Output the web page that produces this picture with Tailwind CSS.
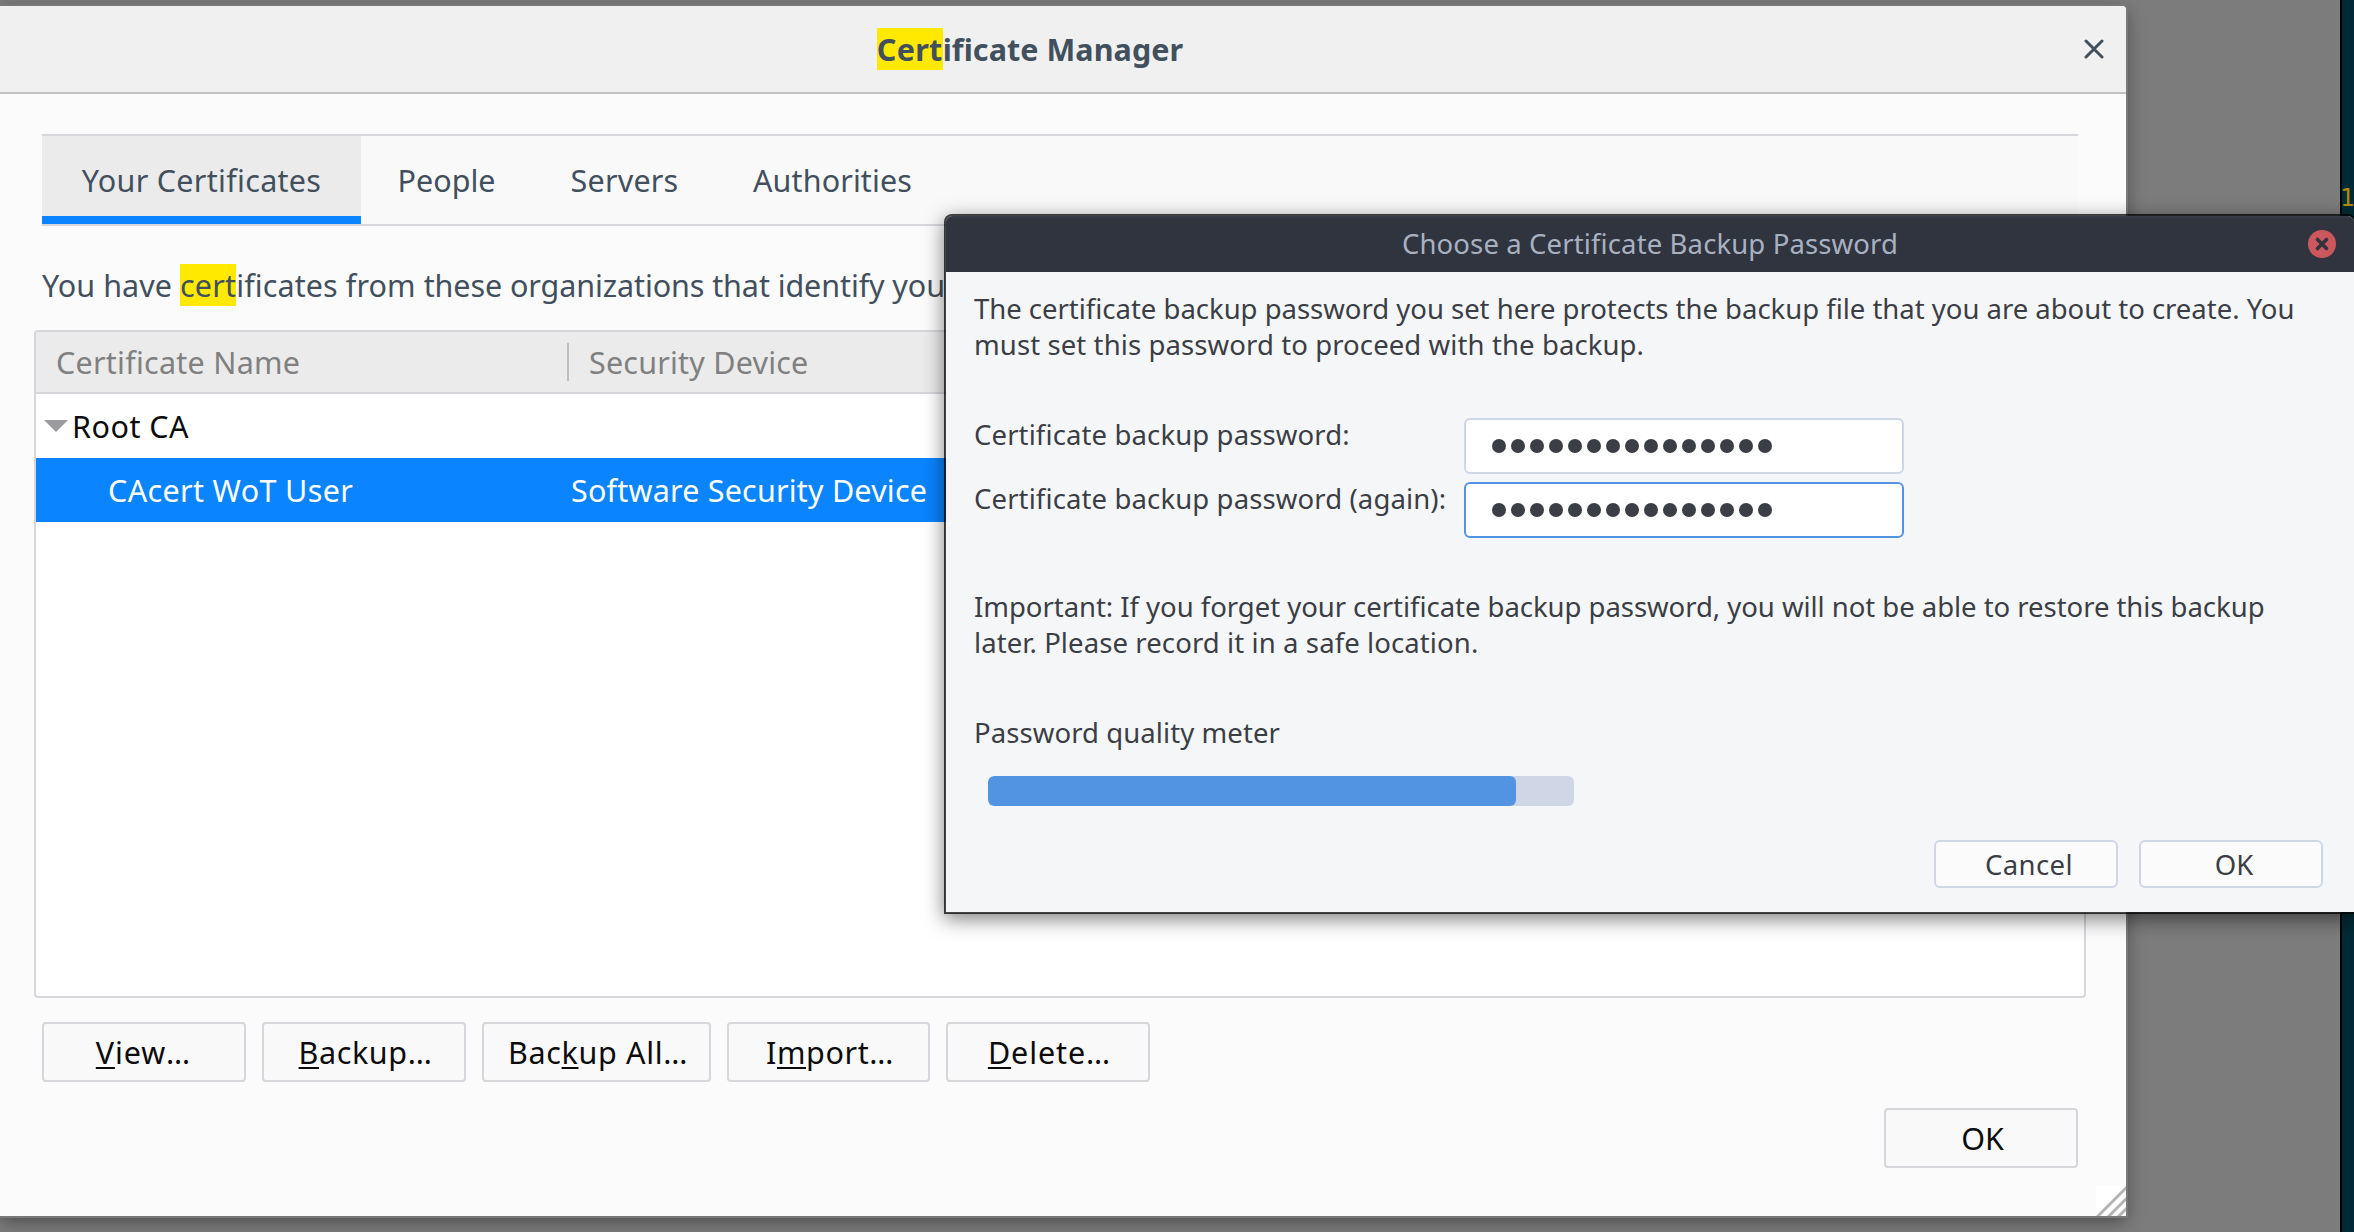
<!DOCTYPE html>
<html lang="en">
<head>
<meta charset="utf-8">
<title>Certificate Manager</title>
<script src="https://cdn.jsdelivr.net/npm/@tailwindcss/browser@4"></script>
</head>
<body class="relative h-[1232px] w-[2354px] overflow-hidden bg-[#7c7c7c] font-['Noto_Sans',sans-serif] text-[30.5px] leading-[42px] text-[#42505e]">

<!-- terminal behind -->
<div class="absolute top-0 left-[2340px] h-full w-[14px] overflow-hidden border-l-2 border-black bg-[#002b36] pt-[184px] font-['DejaVu_Sans_Mono',monospace] text-[24px] leading-[28px] text-[#b58900]"><span class="-ml-[2px]">1</span></div>

<!-- certificate manager window -->
<section class="absolute top-[6px] left-0 flex h-[1210px] w-[2126px] flex-col rounded-tr-[4px] bg-[#fbfbfb] shadow-[0_0_0_2px_#7a7878,0_5px_18px_rgba(0,0,0,0.42)]">
  <header class="flex h-[88px] shrink-0 items-center rounded-tr-[4px] border-b-2 border-[#c1c1c1] bg-[#f0f0f0]">
    <h1 class="w-[2060px] text-center font-bold tracking-[0.06px]"><mark class="bg-[#ffe900] tracking-[0.3px] text-[#42505e]">Cert</mark>ificate Manager</h1>
    <svg class="ml-6 size-5" viewBox="0 0 20 20" fill="none" stroke="#42505e" stroke-width="3" stroke-linecap="round"><path d="M2 2 18 18M18 2 2 18"/></svg>
  </header>

  <nav class="mt-10 mr-12 ml-[42px] flex h-[92px] shrink-0 border-y-2 border-[#d7d7db] bg-[#f9f9f9]">
    <div class="flex w-[319px] items-center justify-center border-b-8 border-[#0a84ff] bg-[#ebebeb] pt-2 tracking-[0.3px]">Your Certificates</div>
    <div class="flex w-[171px] items-center justify-center">People</div>
    <div class="flex w-[185px] items-center justify-center tracking-[0.2px]">Servers</div>
    <div class="flex w-[231px] items-center justify-center tracking-[0.1px]">Authorities</div>
  </nav>

  <p class="mt-[38px] ml-[42px] tracking-[-0.09px] whitespace-nowrap"><span class="tracking-[0.04px]">You have <mark class="bg-[#ffe900] tracking-[0.2px] text-[#42505e]">cert</mark></span><span class="tracking-[0.1px]">ificates from </span>these organizations that identify you</p>

  <div class="mt-6 ml-[34px] h-[668px] w-[2052px] shrink-0 overflow-hidden rounded-[4px] border-2 border-[#d7d7db] bg-white">
    <div class="flex h-[62px] items-center border-b-2 border-[#d7d7db] bg-[#ebebeb] text-[#808080]">
      <div class="w-[531px] pl-5 tracking-[0.25px]">Certificate Name</div>
      <div class="h-[38px] w-[2px] bg-[#bfbfbf]"></div>
      <div class="pl-5 tracking-[0.2px]">Security Device</div>
    </div>
    <div class="flex h-16 items-center text-[#0c0c0d]">
      <svg class="ml-[8px] h-3 w-6" viewBox="0 0 24 12" fill="#9b9b9e"><path d="M0 0H24L12 12Z"/></svg>
      <span class="ml-1 tracking-[0.5px]">Root CA</span>
    </div>
    <div class="flex h-16 items-center bg-[#0a84ff] text-white">
      <div class="w-[535px] pl-[72px] tracking-[0.35px]">CAcert WoT User</div>
      <div class="tracking-[0.2px]">Software Security Device</div>
    </div>
  </div>

  <div class="mt-6 ml-[42px] flex gap-4 text-[#0c0c0d]">
    <button class="h-[60px] w-[204px] rounded-[4px] border-2 border-[#d7d7db] bg-[#f9f9fa] pl-[3px]"><span class="tracking-[0.8px] underline decoration-2 underline-offset-[3px] [text-decoration-skip-ink:none]">V</span><span class="tracking-[0.9px]">iew</span><span class="tracking-[5px]">…</span></button>
    <button class="h-[60px] w-[204px] rounded-[4px] border-2 border-[#d7d7db] bg-[#f9f9fa] pl-[3px] tracking-[0.6px]"><span class="underline decoration-2 underline-offset-[3px] [text-decoration-skip-ink:none]">B</span>ackup…</button>
    <button class="h-[60px] w-[229px] rounded-[4px] border-2 border-[#d7d7db] bg-[#f9f9fa] pl-[3px] tracking-[0.65px]">Bac<span class="underline decoration-2 underline-offset-[3px] [text-decoration-skip-ink:none]">k</span>up All…</button>
    <button class="h-[60px] w-[203px] rounded-[4px] border-2 border-[#d7d7db] bg-[#f9f9fa] pl-[3px] tracking-[0.6px]">I<span class="underline decoration-2 underline-offset-[3px] [text-decoration-skip-ink:none]">m</span>port…</button>
    <button class="h-[60px] w-[204px] rounded-[4px] border-2 border-[#d7d7db] bg-[#f9f9fa] pl-[3px] tracking-[0.9px]"><span class="underline decoration-2 underline-offset-[3px] [text-decoration-skip-ink:none]">D</span>elete…</button>
  </div>
  <div class="mt-[26px] mr-12 flex justify-end text-[#0c0c0d]">
    <button class="h-[60px] w-[194px] rounded-[4px] border-2 border-[#d7d7db] bg-[#f9f9fa] pl-[3px]">OK</button>
  </div>

  <svg class="absolute right-0 bottom-0 size-[30px] bg-white" viewBox="0 0 30 30" stroke="#b4b4b4" stroke-width="3"><path d="M1 31 31 1M12 31 31 12M22 31 31 22"/></svg>
</section>

<!-- backup password dialog -->
<section class="absolute top-[214px] left-[944px] flex h-[700px] w-[1412px] flex-col rounded-t-[8px] border-2 border-black/73 bg-[#f5f6f8] bg-clip-padding text-[27.5px] leading-9 text-[#3b3e45] shadow-[0_5px_20px_rgba(0,0,0,0.5)]">
  <header class="relative flex h-14 shrink-0 items-center justify-center rounded-t-[6px] border-t-2 border-[#353b48] bg-[#2f343f] pb-[3px] tracking-[0.12px] text-[#a7b1c1]">
    Choose a Certificate Backup Password
    <svg class="absolute top-[12px] right-[18px] size-7" viewBox="0 0 28 28"><circle cx="14" cy="14" r="14" fill="#cc575d"/><path d="M9.500 9.500 18.500 18.500M18.500 9.500 9.500 18.500" stroke="#2f343f" stroke-width="3.600" stroke-linecap="round"/></svg>
  </header>
  <div class="flex flex-col pt-[19px] pr-[31px] pl-7">
    <p class="tracking-[-0.02px] whitespace-nowrap">The certificate backup password you set here protects the backup file that you are about to create. You<br><span class="tracking-[0.1px]">must set this password to proceed with the backup.</span></p>
    <div class="mt-[55px] grid grid-cols-[490px_440px] gap-y-2">
      <label class="-mt-[1px] tracking-[0.12px]">Certificate backup password:</label>
      <div class="dots flex h-14 items-center gap-[5px] rounded-[6px] border-2 border-[#cfd6e6] bg-white pl-[26px]"></div>
      <label class="-mt-[1px] tracking-[0.12px]">Certificate backup password (again):</label>
      <div class="dots flex h-14 items-center gap-[5px] rounded-[6px] border-2 border-[#5294e2] bg-white pl-[26px]"></div>
    </div>
    <p class="mt-[51px] tracking-[-0.04px] whitespace-nowrap">Important: If you forget your certificate backup password, you will not be able to restore this backup<br><span class="tracking-[0.1px]">later. Please record it in a safe location.</span></p>
    <p class="mt-[54px] tracking-[0.08px]">Password quality meter</p>
    <div class="mt-[25px] ml-[14px] h-[30px] w-[586px] overflow-hidden rounded-[6px] bg-[#cfd6e6]">
      <div class="h-full rounded-[6px] bg-[#5294e2]" style="width:90.1%"></div>
    </div>
    <div class="mt-[34px] flex justify-end gap-[21px]">
      <button class="h-12 w-[184px] rounded-[6px] border-2 border-[#cfd6e6] bg-[#fbfbfc] pt-[1px] pl-[6px] tracking-[0.4px]">Cancel</button>
      <button class="h-12 w-[184px] rounded-[6px] border-2 border-[#cfd6e6] bg-[#fbfbfc] pt-[1px] pl-[6px]">OK</button>
    </div>
  </div>
</section>

<script>
// masked characters in both password fields
document.querySelectorAll('.dots').forEach(function (field) {
  for (var i = 0; i < 15; i++) {
    var dot = document.createElement('span');
    dot.className = 'size-[14px] rounded-full bg-[#3b3e45]';
    field.appendChild(dot);
  }
});
</script>
</body>
</html>
